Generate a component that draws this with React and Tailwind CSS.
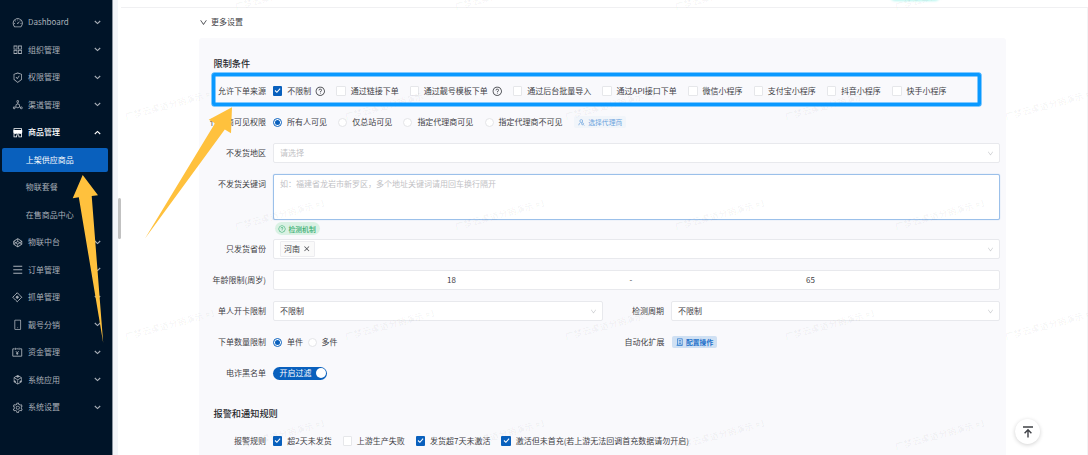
import React from "react";
import {
  AiOutlineDashboard,
  AiOutlineAppstore,
  AiOutlineSafetyCertificate,
  AiOutlineDeploymentUnit,
  AiFillShop,
  AiOutlineCodepen,
  AiOutlineMenu,
  AiOutlineMobile,
  AiOutlineCodeSandbox,
  AiOutlineSetting,
  AiOutlineQuestionCircle,
  AiOutlineDown,
  AiOutlineClose,
} from "react-icons/ai";

function GrabIcon() {
  return (
    <svg width="10.5" height="10.5" viewBox="0 0 20 20" fill="none" stroke="currentColor" strokeWidth="1.9">
      <path d="M7.2 4.2 10 1.4l2.8 2.8M15.8 7.2l2.8 2.8-2.8 2.8M12.8 15.8 10 18.6l-2.8-2.8M4.2 12.8 1.4 10l2.8-2.8" />
      <path d="M7.2 4.2 4.2 7.2M12.8 4.2l3 3M7.2 15.8l-3-3M12.8 15.8l3-3" />
      <circle cx="10" cy="10" r="2" fill="currentColor" />
    </svg>
  );
}

function FundIcon() {
  return (
    <svg width="10.5" height="10.5" viewBox="0 0 20 20" fill="none" stroke="currentColor" strokeWidth="1.7">
      <path d="M5 3.5H1.5v14h17v-14H15M8 3.5h4M6.5 1.5v4M13.5 1.5v4" />
      <path d="m7.5 8 2.5 3.5L12.5 8M10 11.5V15M8 12.5h4" />
    </svg>
  );
}

function AgentIcon() {
  return (
    <svg width="7" height="7" viewBox="0 0 14 14" fill="none" stroke="currentColor" strokeWidth="1.4">
      <circle cx="6.5" cy="4" r="2.8" />
      <path d="M1.5 12.5c.2-2.5 1.5-4.5 3.5-5.5M8 7l1 1" />
      <circle cx="9" cy="9.5" r="2" />
      <path d="m10.5 11 2 2" />
    </svg>
  );
}

function DocIcon() {
  return (
    <svg width="7" height="8" viewBox="0 0 14 16" fill="none" stroke="currentColor" strokeWidth="1.3">
      <path d="M3 1.5h9.5v13H3zM1 14.5h12M5.5 5h4.500M5.5 8H10M5.500 11H10" />
    </svg>
  );
}

function ToTopIcon() {
  return (
    <svg width="12" height="12" viewBox="0 0 12 12" fill="none" stroke="#3f4146" strokeWidth="1.4">
      <path d="M1 1h10M6 11.500V4M2.600 7.200 6 3.800l3.400 3.400" />
    </svg>
  );
}

const menu = [
  { label: "Dashboard", icon: <AiOutlineDashboard /> },
  { label: "组织管理", icon: <AiOutlineAppstore /> },
  { label: "权限管理", icon: <AiOutlineSafetyCertificate /> },
  { label: "渠道管理", icon: <AiOutlineDeploymentUnit /> },
  {
    label: "商品管理",
    icon: <AiFillShop />,
    open: true,
    children: ["上架供应商品", "物联套餐", "在售商品中心"],
  },
  { label: "物联中台", icon: <AiOutlineCodepen /> },
  { label: "订单管理", icon: <AiOutlineMenu /> },
  { label: "抓单管理", icon: <GrabIcon /> },
  { label: "靓号分销", icon: <AiOutlineMobile /> },
  { label: "资金管理", icon: <FundIcon /> },
  { label: "系统应用", icon: <AiOutlineCodeSandbox /> },
  { label: "系统设置", icon: <AiOutlineSetting /> },
];

function Chevron({ up }) {
  return (
    <svg
      width="7"
      height="5"
      viewBox="0 0 7 5"
      fill="none"
      stroke="currentColor"
      strokeWidth="1.1"
      className={up ? "rotate-180" : ""}
    >
      <path d="M.8 1 3.500 3.600 6.200 1" />
    </svg>
  );
}

function Sidebar() {
  return (
    <aside className="w-[112px] shrink-0 bg-[#001428] pt-[8.700px] text-[#a9b0b8]">
      {menu.map((item) => (
        <div key={item.label}>
          <div
            className={
              item.open
                ? "flex h-[27.500px] items-center pl-[11.500px] pr-[11px] font-medium text-white"
                : "flex h-[27.500px] items-center pl-[11.500px] pr-[11px]"
            }
          >
            <span className="flex w-[11.500px] justify-center text-[11.500px]">{item.icon}</span>
            <span className="ml-[5px] flex-1 tracking-[-0.02px]">{item.label}</span>
            <Chevron up={item.open} />
          </div>
          {item.children &&
            item.children.map((child, i) => (
              <div key={child} className="flex h-[27.500px] items-center pl-[2.300px] pr-[4px]">
                <div
                  className={
                    i === 0
                      ? "flex h-[24px] flex-1 items-center rounded-[2px] bg-[#0960bd] pl-[23.400px] text-white"
                      : "flex h-[24px] flex-1 items-center pl-[23.400px]"
                  }
                >
                  {child}
                </div>
              </div>
            ))}
        </div>
      ))}
    </aside>
  );
}

function Row({ label, className = "mb-[11px]", children }) {
  return (
    <div className={`flex ${className}`}>
      <div className="flex h-[20px] w-[67px] shrink-0 items-center justify-end whitespace-nowrap">{label}</div>
      <div className="ml-[7px] flex min-h-[20px] flex-1 items-center">{children}</div>
    </div>
  );
}

function Check({ checked, help, children, className = "mr-[11px]" }) {
  return (
    <label className={`flex items-center whitespace-nowrap ${className}`}>
      <span
        className={
          checked
            ? "flex size-[9.300px] items-center justify-center rounded-[1px] bg-[#0960bd]"
            : "size-[9.300px] rounded-[1px] border border-[#e6e7ea] bg-white"
        }
      >
        {checked && (
          <svg width="7" height="7" viewBox="0 0 7 7" fill="none" stroke="white" strokeWidth="1.100">
            <path d="M1 3.500 2.900 5.300 6.100 1.700" />
          </svg>
        )}
      </span>
      <span className="ml-[4.900px]">{children}</span>
      {help && <AiOutlineQuestionCircle className="ml-[4px] text-[10.500px]" />}
    </label>
  );
}

function Radio({ checked, children, className = "mr-[11.200px]" }) {
  return (
    <label className={`flex items-center whitespace-nowrap ${className}`}>
      <span
        className={
          checked
            ? "flex size-[9px] items-center justify-center rounded-full border border-[#0960bd] bg-white"
            : "size-[9px] rounded-full border border-[#e4e5e8] bg-white"
        }
      >
        {checked && <span className="size-[5px] rounded-full bg-[#0960bd]" />}
      </span>
      <span className="ml-[5px]">{children}</span>
    </label>
  );
}

function Select({ children, className = "flex-1" }) {
  return (
    <div
      className={`flex h-[20px] items-center justify-between rounded-[2px] border border-[#e8e9ed] bg-white pl-[6px] pr-[5.500px] ${className}`}
    >
      {children}
      <AiOutlineDown className="text-[7px] text-[#c4c6ca]" />
    </div>
  );
}

// staggered grid, every other line is shifted by half a step
const watermarks = [];
[8, 118, 228, 338, 448].forEach((y, row) => {
  for (let x = row % 2 === 0 ? 236 : 126; x < 1088; x += 220) {
    watermarks.push({ x, y });
  }
});

function Watermark() {
  return (
    <svg width="1088" height="455" className="pointer-events-none absolute left-0 top-0">
      {watermarks.map(({ x, y }) => (
        <text
          key={`${x}-${y}`}
          transform={`translate(${x} ${y + 2}) rotate(-15)`}
          fill="#000000"
          fillOpacity="0.06"
          className="text-[9px]"
        >
          广梦云渠道分销演示 #1
        </text>
      ))}
    </svg>
  );
}

function Arrows() {
  return (
    <svg width="1088" height="455" className="pointer-events-none absolute left-0 top-0">
      <g fill="#ffc13d">
        <path d="M232 107.300 208.700 119.700 215 123.300 145 238.500 224.800 129.600 231 133.200Z" />
        <path d="M82.700 175 72.700 198.300 78.800 197.200 103.200 343 91.700 196 98 195.200Z" />
      </g>
    </svg>
  );
}

function App() {
  return (
    <div className="relative flex h-[455px] w-[1088px] overflow-hidden bg-white font-['Noto_Sans_CJK_SC',sans-serif] text-[8px] leading-[12px] text-[#3f4146]">
      <Sidebar />
      <div className="flex w-[8.500px] shrink-0 items-start border-l border-[#8b95a0]">
        <div className="h-full w-[5px] bg-[#f3f5f9]" />
        <div className="mt-[198px] h-[41px] w-[2.500px] rounded-full bg-[#c1c1c1]" />
      </div>

      <main className="flex flex-1 flex-col">
        <header className="flex h-[8px] shrink-0 justify-end overflow-hidden border-b border-[#f0f0f2] pr-[148px]">
          <div className="-mt-[9px] h-[10px] w-[50px] rounded-full bg-[#b5f6ef] blur-[1px]" />
        </header>
        <div className="flex-1 border-r border-[#f3f3f5] pl-[78.500px] pr-[81px]">
          <div className="flex h-[30px] items-center pb-[1.500px]">
            <AiOutlineDown className="text-[9px]" />
            <span className="ml-[3px]">更多设置</span>
          </div>

          <section className="h-[430px] rounded-[3px] bg-[#f9f9fc] pr-[6px] pt-[18px]">
            <h3 className="mb-[11px] pl-[14.500px] text-[9.200px] leading-[14px] font-medium text-[#26282c]">限制条件</h3>
            <Row label="允许下单来源">
              <Check checked help className="mr-[10.800px]">不限制</Check>
              <Check>通过链接下单</Check>
              <Check help className="mr-[10.800px]">通过靓号模板下单</Check>
              <Check>通过后台批量导入</Check>
              <Check className="mr-[11.500px]">通过API接口下单</Check>
              <Check>微信小程序</Check>
              <Check>支付宝小程序</Check>
              <Check className="mr-[11.500px]">抖音小程序</Check>
              <Check>快手小程序</Check>
            </Row>
            <Row label="代理商可见权限">
              <Radio checked>所有人可见</Radio>
              <Radio>仅总站可见</Radio>
              <Radio>指定代理商可见</Radio>
              <Radio>指定代理商不可见</Radio>
              <button className="flex h-[12.500px] items-center gap-[3.500px] rounded-[2px] bg-[#f1f5fa] px-[4px] text-[6.800px] text-[#6fa5de]">
                <AgentIcon />
                选择代理商
              </button>
            </Row>
            <Row label="不发货地区">
              <Select>
                <span className="text-[#bfc1c5]">请选择</span>
              </Select>
            </Row>
            <Row label="不发货关键词" className="mb-[2px]">
              <div className="h-[46px] flex-1 rounded-[2px] border border-[#9bc0ea] bg-white px-[6px] pt-[3px] text-[#bfc1c5] shadow-[0_0_1px_#9bc0ea]">
                如：福建省龙岩市新罗区，多个地址关键词请用回车换行隔开
              </div>
            </Row>
            <div className="mb-[4px] flex pl-[76px]">
              <span className="flex h-[13px] items-center gap-[2.500px] rounded-full bg-[#daf1e4] px-[3px] pr-[4.500px] text-[6.800px] font-medium text-[#35ad70]">
                <AiOutlineQuestionCircle className="text-[8px]" />
                检测机制
              </span>
            </div>
            <Row label="只发货省份">
              <Select>
                <span className="flex h-[16px] items-center gap-[3px] rounded-[1px] border border-[#ededf0] bg-[#fafafa] px-[3px]">
                  河南
                  <AiOutlineClose className="text-[7.500px]" />
                </span>
              </Select>
            </Row>
            <Row label="年龄限制(周岁)">
              <div className="flex h-[20px] flex-1 items-center rounded-[2px] border border-[#e8e9ed] bg-white pr-[11px] text-center">
                <span className="flex-1">18</span>
                <span className="w-[4px]">-</span>
                <span className="flex-1">65</span>
              </div>
            </Row>
            <Row label="单人开卡限制">
              <Select className="w-[330px]">不限制</Select>
              <span className="ml-auto mr-[7px]">检测周期</span>
              <Select className="w-[329px]">不限制</Select>
            </Row>
            <Row label="下单数量限制">
              <Radio checked className="mr-[4.500px]">单件</Radio>
              <Radio>多件</Radio>
              <div className="ml-auto flex w-[375.500px] items-center">
                自动化扩展
                <button className="ml-[7px] flex h-[12.500px] items-center gap-[3.500px] rounded-[2px] bg-[#cfe0f3] px-[4px] text-[6.800px] font-bold text-[#1e70ca]">
                  <DocIcon />
                  配置操作
                </button>
              </div>
            </Row>
            <Row label="电诈黑名单" className="mb-[23px]">
              <div className="flex h-[13px] w-[54px] items-center justify-between rounded-full bg-[#0960bd] pl-[6.500px] pr-[1px] text-white">
                开启过滤
                <span className="size-[10.500px] rounded-full bg-white" />
              </div>
            </Row>
            <h3 className="mb-[11px] pl-[14.500px] text-[9.200px] leading-[14px] font-medium text-[#26282c]">报警和通知规则</h3>
            <Row label="报警规则">
              <Check checked>超2天未发货</Check>
              <Check>上游生产失败</Check>
              <Check checked>发货超7天未激活</Check>
              <Check checked>激活但未首充(若上游无法回调首充数据请勿开启)</Check>
            </Row>
          </section>
        </div>
      </main>

      <Watermark />
      <div className="pointer-events-none absolute left-[212px] top-[73px] h-[33px] w-[769px] rounded-[2px] border-[3px] border-[#0a99ff] shadow-[0_0_0_0.5px_#0a99ff,inset_0_0_0_0.5px_#0a99ff]" />
      <button className="absolute left-[1015px] top-[419px] flex size-[25px] items-center justify-center rounded-full bg-white shadow-[0_1px_4px_rgba(0,0,0,0.18)]">
        <ToTopIcon />
      </button>
      <Arrows />
    </div>
  );
}

export default App;
